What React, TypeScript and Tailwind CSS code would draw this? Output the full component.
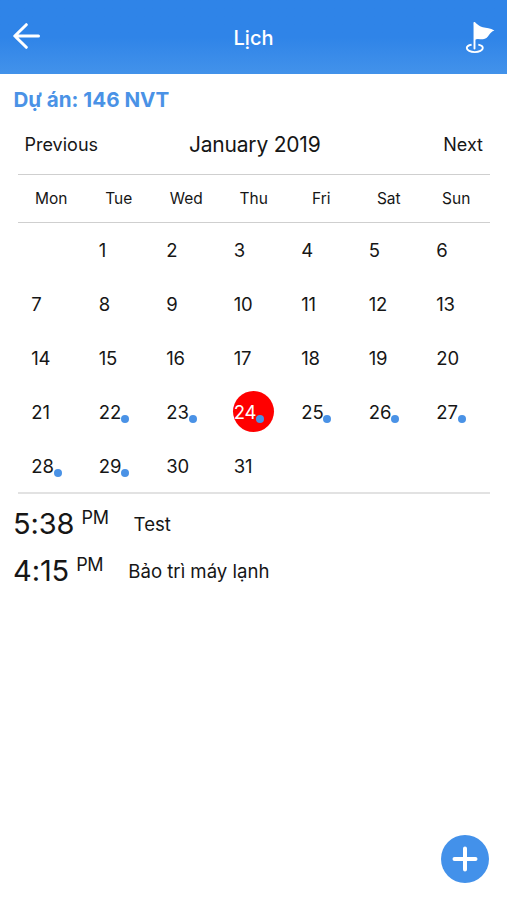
type Day = { date: number; marked?: boolean; selected?: boolean };

const WEEKDAYS = ["Mon", "Tue", "Wed", "Thu", "Fri", "Sat", "Sun"];

const MARKED = [22, 23, 24, 25, 26, 27, 28, 29];

const DAYS: Day[] = Array.from({ length: 31 }, (_, i) => ({
  date: i + 1,
  marked: MARKED.includes(i + 1),
  selected: i + 1 === 24,
}));

function Header() {
  return (
    <header className="grid h-[74px] shrink-0 grid-cols-[60px_1fr_60px] items-center bg-linear-to-b from-[#2f84e8] from-50% to-[#4292ea] text-white">
      <button aria-label="Back" className="pl-[13px]">
        <svg width="28" height="28" viewBox="0 0 28 28" fill="none" stroke="currentColor" strokeWidth="3" strokeLinecap="round" strokeLinejoin="round">
          <path d="M25.5 13H2M13.3 1.7 1.8 13l11.5 11.3" />
        </svg>
      </button>
      <h1 className="pt-0.5 text-center text-[20px] font-medium">Lịch</h1>
      <button aria-label="Location" className="flex justify-end pr-3">
        <svg width="30" height="34" viewBox="0 0 30 34" fill="none">
          <path d="M6.6 24.7C3.7 25.1 1.8 26.4 1.8 28.1c0 2.3 3.6 4 8 4s8-1.7 8-4c0-1.7-1.8-3-4.5-3.5" stroke="currentColor" strokeWidth="1.9" />
          <path d="M9.5 3v25.5" stroke="currentColor" strokeWidth="1.9" strokeLinecap="round" />
          <path d="M8.8 2.1c3.3 1.2 4.9 4.3 9 5.1 3.8.7 7.5.9 11.6 3.3-5.4 1.6-5.6 8.3-11.4 8.8-2.8.2-5.7-1.2-8.5.6z" fill="currentColor" />
        </svg>
      </button>
    </header>
  );
}

function DayCell({ day }: { day: Day }) {
  return (
    <div className="flex h-[53.9px] items-center justify-center">
      <div
        className={
          day.selected
            ? "flex size-[41px] items-center rounded-full bg-[#ff0000] text-white"
            : "flex size-[41px] items-center"
        }
      >
        <span className="mt-[2px] ml-[0.5px] text-[18.5px] tracking-[-0.15px]">{day.date}</span>
        {day.marked && <span className="mt-[15px] size-2 shrink-0 rounded-full bg-[#4a92e6]" />}
      </div>
    </div>
  );
}

function Calendar() {
  return (
    <section className="ml-[17.5px] w-[472.5px]">
      <div className="flex h-[61px] items-center justify-between px-[7px] pt-[2px]">
        <button className="w-[90px] text-left text-[18px]">Previous</button>
        <h2 className="pl-0.5 text-[21px] tracking-[-0.2px]">January 2019</h2>
        <button className="w-[90px] text-right text-[18px]">Next</button>
      </div>
      <div className="grid h-[49px] grid-cols-7 items-center border-y border-[#cfcfcf] text-center text-[15.5px]">
        {WEEKDAYS.map((name) => (
          <span key={name}>{name}</span>
        ))}
      </div>
      <div className="grid grid-cols-7 border-b-2 border-[#e2e2e2]">
        <div />
        {DAYS.map((day) => (
          <DayCell key={day.date} day={day} />
        ))}
      </div>
    </section>
  );
}

function Event({ time, title }: { time: string; title: string }) {
  return (
    <li className="flex h-[47px] items-center pl-[13px]">
      <span className="text-[29px] tracking-[-0.1px]">{time}</span>
      <span className="mb-3 ml-[7px] text-[18px] tracking-[-0.3px]">PM</span>
      <span className="mt-px ml-[25px] text-[18.6px]">{title}</span>
    </li>
  );
}

export default function App() {
  return (
    <div className="relative flex h-[900px] w-[507px] flex-col overflow-hidden bg-white font-['Inter',sans-serif] text-[#161616]">
      <Header />
      <p className="flex h-[39px] items-center pt-3.5 pl-[13.5px] text-[20.6px] font-bold text-[#4a92e6]">Dự án: 146 NVT</p>
      <Calendar />
      <ul className="mt-[6px]">
        <Event time="5:38" title="Test" />
        <Event time="4:15" title="Bảo trì máy lạnh" />
      </ul>
      <button
        aria-label="Add"
        className="absolute right-[18px] bottom-[17px] flex size-12 items-center justify-center rounded-full bg-[#4391ea] text-white"
      >
        <svg width="26" height="26" viewBox="0 0 26 26" stroke="currentColor" strokeWidth="4" strokeLinecap="round">
          <path d="M13 2.5v21M2.5 13h21" />
        </svg>
      </button>
    </div>
  );
}
